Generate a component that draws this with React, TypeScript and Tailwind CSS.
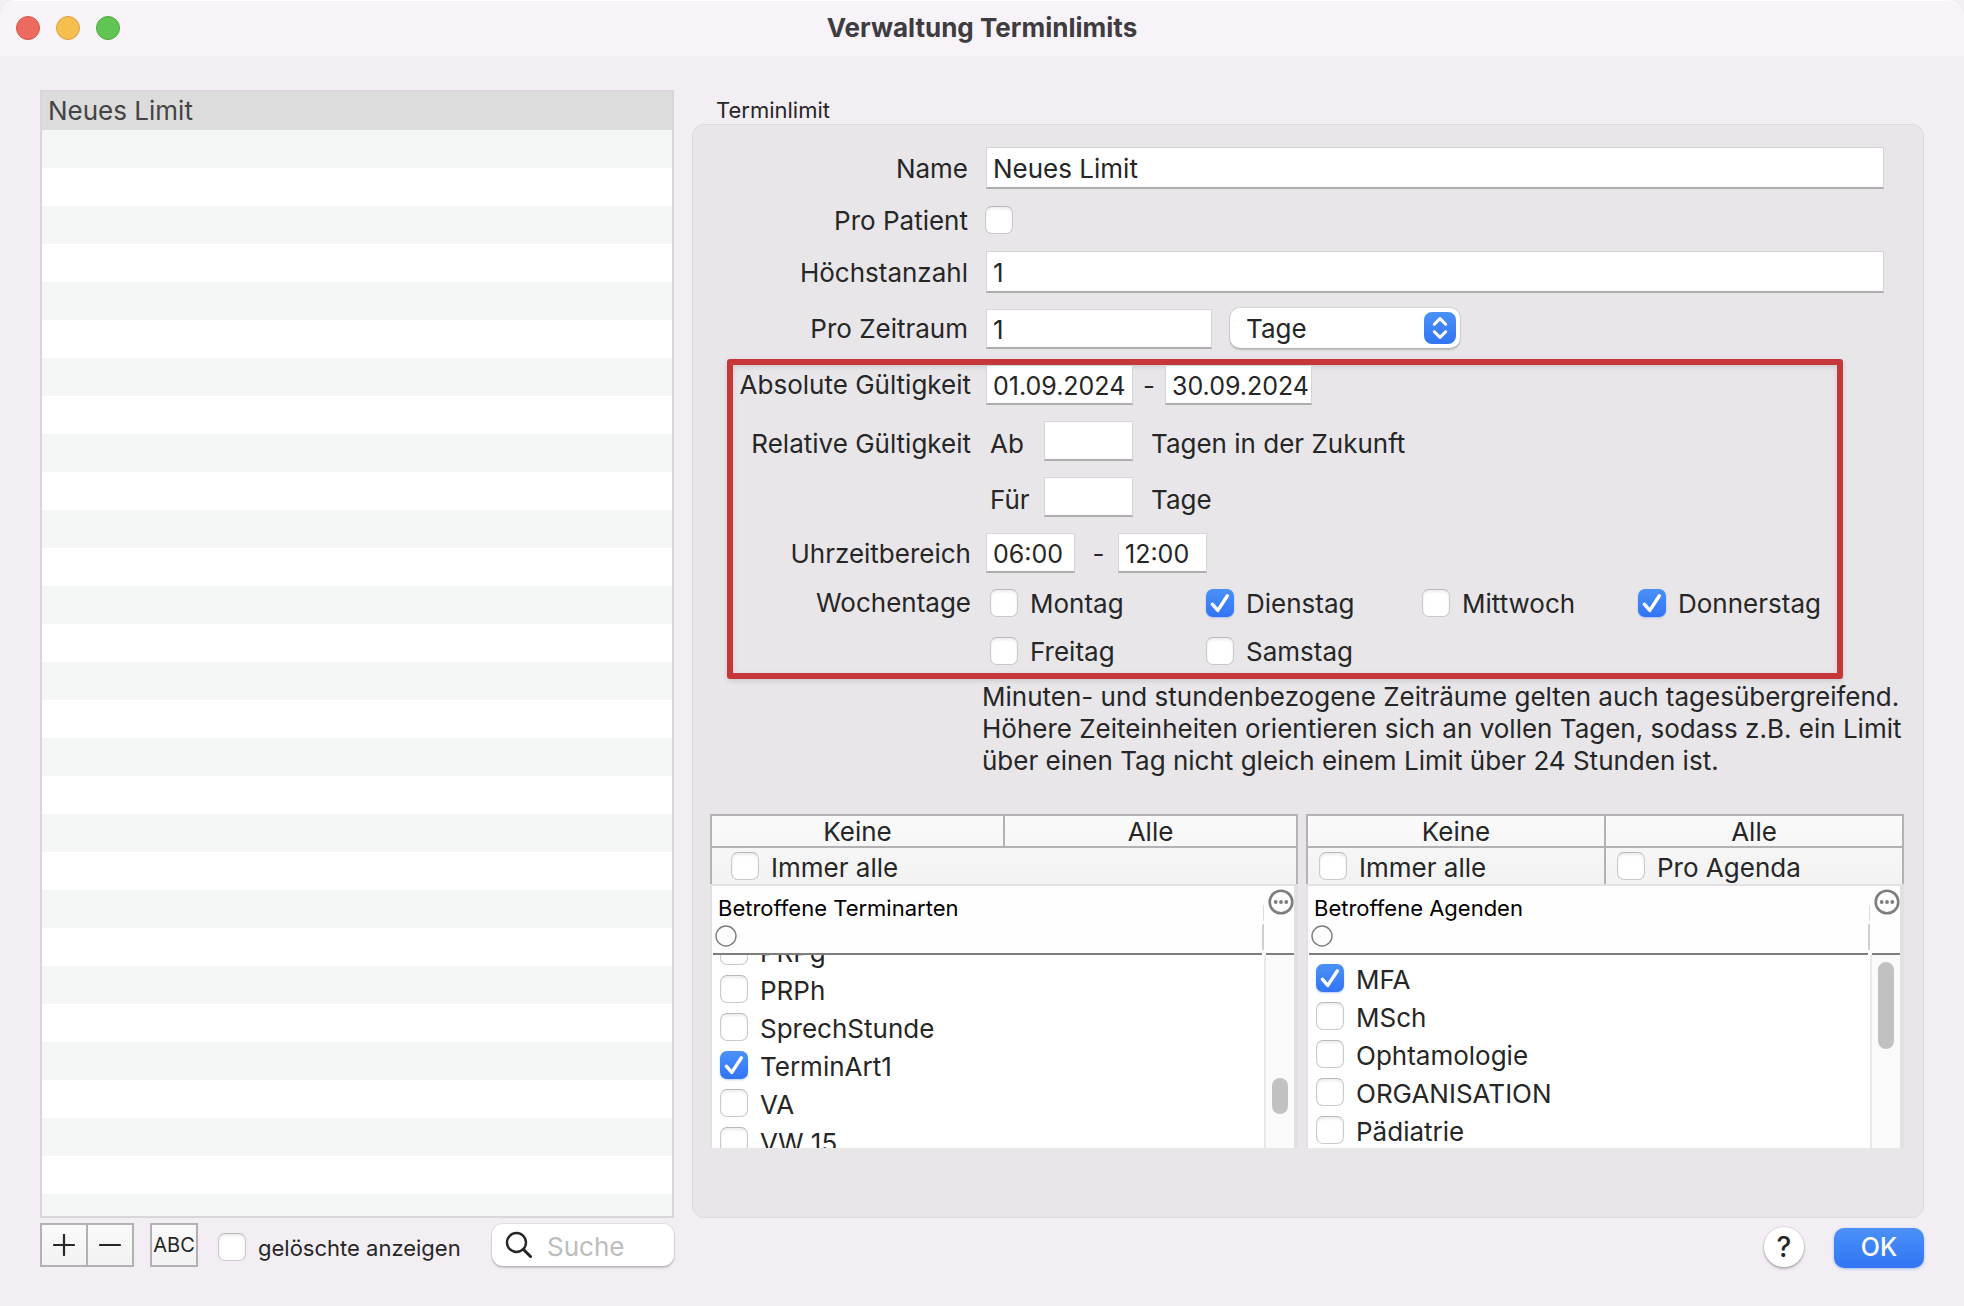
import { useState } from "react";
import type { InputHTMLAttributes, ReactNode } from "react";

const weekdays = [
  { name: "Montag", checked: false },
  { name: "Dienstag", checked: true },
  { name: "Mittwoch", checked: false },
  { name: "Donnerstag", checked: true },
  { name: "Freitag", checked: false },
  { name: "Samstag", checked: false },
];

const appointmentTypes = [
  { name: "PRPg", checked: false },
  { name: "PRPh", checked: false },
  { name: "SprechStunde", checked: false },
  { name: "TerminArt1", checked: true },
  { name: "VA", checked: false },
  { name: "VW 15", checked: false },
];

const agendas = [
  { name: "MFA", checked: true },
  { name: "MSch", checked: false },
  { name: "Ophtamologie", checked: false },
  { name: "ORGANISATION", checked: false },
  { name: "Pädiatrie", checked: false },
];

function Checkbox({ id, checked = false }: { id: string; checked?: boolean }) {
  const [on, setOn] = useState(checked);
  return (
    <span className="relative block h-7 w-7 shrink-0">
      <input
        id={id}
        type="checkbox"
        checked={on}
        onChange={(e) => setOn(e.target.checked)}
        className="block h-7 w-7 appearance-none rounded-[7px] border border-[#cbc9cc] border-t-[#b9b7ba] bg-white shadow-[inset_0_2px_3px_rgba(0,0,0,0.08)] checked:border-0 checked:bg-linear-to-b checked:from-[#4b91f7] checked:to-[#3274f6] checked:shadow-[0_1px_2px_rgba(50,116,246,0.35)]"
      />
      {on && (
        <svg className="pointer-events-none absolute inset-0 h-7 w-7" viewBox="0 0 28 28" fill="none" stroke="#fff" strokeWidth={3.4} strokeLinecap="round" strokeLinejoin="round">
          <path d="M6.3 15.2 L11.8 21.4 L21.4 6.8" />
        </svg>
      )}
    </span>
  );
}

function CheckItem({ id, checked, children }: { id: string; checked?: boolean; children: ReactNode }) {
  return (
    <div className="flex items-center gap-3">
      <Checkbox id={id} checked={checked} />
      <label htmlFor={id} className="whitespace-nowrap pt-[2px]">{children}</label>
    </div>
  );
}

function Field({ className = "", ...props }: InputHTMLAttributes<HTMLInputElement>) {
  return (
    <input
      type="text"
      className={`min-w-0 border border-[#d6d4d7] border-b-2 border-b-[#b0aeb1] bg-white pl-[6px] pt-[2px] outline-none ${className}`}
      {...props}
    />
  );
}

function MoreIcon() {
  return (
    <svg className="h-[26px] w-[26px]" viewBox="0 0 26 26" fill="none">
      <circle cx="13" cy="13" r="11.3" stroke="#7d7d7d" strokeWidth="2.6" />
      <circle cx="7.7" cy="13" r="1.9" fill="#7d7d7d" />
      <circle cx="13" cy="13" r="1.9" fill="#7d7d7d" />
      <circle cx="18.3" cy="13" r="1.9" fill="#7d7d7d" />
    </svg>
  );
}

function ListHeader({ title }: { title: string }) {
  return (
    <div className="flex h-[69px] gap-1 bg-[#fefefe] pl-px">
      <div className="flex flex-1 flex-col border-b-2 border-[#7e7e7e] pl-[5px] pt-2">
        <h3 className="text-[22px] leading-7 text-black">{title}</h3>
        <svg className="-ml-[3px] mt-[3px] h-[22px] w-[22px]" viewBox="0 0 22 22" fill="none" stroke="#7b7b7b" strokeWidth="1.4">
          <circle cx="11" cy="11" r="10" />
        </svg>
      </div>
      <div className="relative w-7 border-b-2 border-[#7e7e7e]">
        <div className="absolute -left-[3px] top-[19px] h-4 w-px bg-[#dcdcdc]" />
        <div className="absolute -left-[4px] top-[38px] h-[26px] w-[2px] bg-[#cfcfcf]" />
        <button aria-label="Spaltenoptionen" className="ml-[2px] mt-[3px] block">
          <MoreIcon />
        </button>
      </div>
    </div>
  );
}

type Item = { name: string; checked: boolean };

function CheckList({ prefix, items, listClass, thumbClass }: { prefix: string; items: Item[]; listClass: string; thumbClass: string }) {
  return (
    <div className="flex h-[193px] overflow-hidden bg-white">
      <ul className={`flex-1 pl-2 ${listClass}`}>
        {items.map((item) => (
          <li key={item.name} className="flex h-[38px] items-center">
            <CheckItem id={`${prefix}-${item.name}`} checked={item.checked}>{item.name}</CheckItem>
          </li>
        ))}
      </ul>
      <div className="w-[30px] border-l-2 border-[#e8e8e8] bg-[#fafafa] px-[6px]">
        <div className={`w-4 rounded-full bg-[#c1c1c1] ${thumbClass}`} />
      </div>
    </div>
  );
}

export default function App() {
  const [limit, setLimit] = useState("Neues Limit");

  return (
    <div className="flex min-h-screen flex-col bg-[#f3eef4] font-['Inter','Liberation_Sans',sans-serif] text-[26px] text-[#262626]">
      <header className="grid h-14 grid-cols-[1fr_auto_1fr] items-center rounded-t-[18px] border-t border-white bg-[#f8f3f9] px-4 pb-[2px]">
        <div className="flex gap-4">
          <button aria-label="Schließen" className="h-6 w-6 rounded-full border border-[#d35549] bg-[#ed6a5e]" />
          <button aria-label="Minimieren" className="h-6 w-6 rounded-full border border-[#d8a03c] bg-[#f5bf4f]" />
          <button aria-label="Maximieren" className="h-6 w-6 rounded-full border border-[#51a73e] bg-[#61c554]" />
        </div>
        <h1 className="font-bold leading-8 text-[#3f3c40]">Verwaltung Terminlimits</h1>
      </header>

      <main className="grid grid-cols-[minmax(0,634fr)_minmax(0,1232fr)] gap-x-[18px] px-10 pt-[34px]">
        <ul className="border-2 border-[#d8d6d9] bg-[repeating-linear-gradient(to_bottom,#fff_0px,#fff_38px,#f4f5f5_38px,#f4f5f5_76px)]">
          <li className="h-[38px] bg-[#dcdcdc] pl-[6px] leading-[38px] text-[#444]">{limit}</li>
        </ul>

        <section>
          <h2 className="h-[34px] pl-6 pt-[6px] text-[22px] leading-7">Terminlimit</h2>
          <div className="rounded-xl border border-[#dcdadd] bg-[#e8e6e9] pb-[69px] pt-[22px]">
            <div className="pr-[39px]">
              <div className="flex h-[42px] items-center gap-[18px]">
                <label htmlFor="name" className="w-[275px] text-right">Name</label>
                <Field id="name" value={limit} onChange={(e) => setLimit(e.target.value)} className="h-[42px] flex-1" />
              </div>
              <div className="mt-[17px] flex h-7 items-center gap-[17px]">
                <label htmlFor="pro-patient" className="w-[275px] text-right">Pro Patient</label>
                <Checkbox id="pro-patient" />
              </div>
              <div className="mt-[17px] flex h-[42px] items-center gap-[18px]">
                <label htmlFor="max" className="w-[275px] text-right">Höchstanzahl</label>
                <Field id="max" defaultValue="1" className="h-[42px] flex-1" />
              </div>
              <div className="mt-[15px] flex h-[42px] items-center gap-[18px]">
                <label htmlFor="period" className="w-[275px] pb-[2px] text-right">Pro Zeitraum</label>
                <Field id="period" defaultValue="1" className="h-10 w-[226px]" />
                <div className="relative mb-[2px]">
                  <select
                    aria-label="Zeiteinheit"
                    defaultValue="Tage"
                    className="block h-10 w-[230px] appearance-none rounded-[10px] bg-white pl-4 shadow-[0_0_1px_1px_rgba(0,0,0,0.08),0_2px_2px_rgba(0,0,0,0.18)] outline-none"
                  >
                    <option>Minuten</option>
                    <option>Stunden</option>
                    <option>Tage</option>
                    <option>Wochen</option>
                    <option>Monate</option>
                  </select>
                  <svg className="pointer-events-none absolute right-1 top-1 h-8 w-8" viewBox="0 0 32 32" fill="none">
                    <defs>
                      <linearGradient id="stepper" x1="0" y1="0" x2="0" y2="1">
                        <stop offset="0" stopColor="#4b91f7" />
                        <stop offset="1" stopColor="#3274f6" />
                      </linearGradient>
                    </defs>
                    <rect width="32" height="32" rx="8" fill="url(#stepper)" />
                    <path d="M10.3 12.3 L16 6.6 L21.7 12.3 M10.3 19.7 L16 25.4 L21.7 19.7" stroke="#fff" strokeWidth="3" strokeLinecap="round" strokeLinejoin="round" />
                  </svg>
                </div>
              </div>
            </div>

            <div className="ml-[34px] mr-20 mt-[9px] rounded-[3px] border-[6px] border-[#c53738] pb-[9px] shadow-[0_2px_5px_rgba(0,0,0,0.12),inset_0_2px_5px_rgba(0,0,0,0.12)]">
              <div className="flex h-10 items-center">
                <label htmlFor="valid-from" className="mr-[15px] w-[238px] pb-[2px] text-right">Absolute Gültigkeit</label>
                <Field id="valid-from" defaultValue="01.09.2024" className="h-10 w-[147px] text-[25px]" />
                <span className="w-8 text-center">-</span>
                <Field aria-label="Gültig bis" defaultValue="30.09.2024" className="h-10 w-[147px] text-[25px]" />
              </div>
              <div className="mt-4 flex h-10 items-center">
                <span className="mr-[15px] w-[238px] pt-1 text-right">Relative Gültigkeit</span>
                <label htmlFor="from-days" className="w-[58px] pl-1 pt-1">Ab</label>
                <Field id="from-days" className="h-10 w-[89px]" />
                <span className="pl-[18px] pt-1">Tagen in der Zukunft</span>
              </div>
              <div className="mt-4 flex h-10 items-center pl-[253px]">
                <label htmlFor="for-days" className="w-[58px] pl-1 pt-1">Für</label>
                <Field id="for-days" className="h-10 w-[89px]" />
                <span className="pl-[18px] pt-1">Tage</span>
              </div>
              <div className="mt-4 flex h-10 items-center">
                <label htmlFor="time-from" className="mr-[15px] w-[238px] text-right">Uhrzeitbereich</label>
                <Field id="time-from" defaultValue="06:00" className="h-10 w-[89px] text-[25px]" />
                <span className="w-[43px] pl-1 text-center">-</span>
                <Field aria-label="Uhrzeit bis" defaultValue="12:00" className="h-10 w-[89px] text-[25px]" />
              </div>
              <div className="mt-[15px] flex">
                <span className="mr-[19px] w-[238px] shrink-0 text-right leading-[30px]">Wochentage</span>
                <div className="grid grid-cols-[216px_216px_216px_auto] gap-y-5">
                  {weekdays.map((day) => (
                    <div key={day.name} className="h-7 leading-7">
                      <CheckItem id={`day-${day.name}`} checked={day.checked}>{day.name}</CheckItem>
                    </div>
                  ))}
                </div>
              </div>
            </div>

            <p className="ml-[289px] mr-4 mt-[2px] leading-8">
              Minuten- und stundenbezogene Zeiträume gelten auch tagesübergreifend.
              Höhere Zeiteinheiten orientieren sich an vollen Tagen, sodass z.B. ein Limit
              über einen Tag nicht gleich einem Limit über 24 Stunden ist.
            </p>

            <div className="mt-[37px] grid grid-cols-[588fr_598fr] gap-2 pl-[17px] pr-[19px]">
              <div>
                <div className="border-2 border-b-0 border-[#b3b1b4] bg-linear-to-b from-[#fafafa] to-[#f2f2f2]">
                  <div className="flex h-8 border-b-2 border-[#b3b1b4]">
                    <button className="flex-1 border-r-2 border-[#b3b1b4] leading-[32px]">Keine</button>
                    <button className="flex-1 leading-[32px]">Alle</button>
                  </div>
                  <div className="flex h-9 items-center pl-[19px]">
                    <CheckItem id="types-all">Immer alle</CheckItem>
                  </div>
                </div>
                <div className="border-l-2 border-r-4 border-t-2 border-[#e2e0e3]">
                  <ListHeader title="Betroffene Terminarten" />
                  <CheckList prefix="type" items={appointmentTypes} listClass="-mt-[23px]" thumbClass="mt-[123px] h-9" />
                </div>
              </div>
              <div>
                <div className="border-2 border-b-0 border-[#b3b1b4] bg-linear-to-b from-[#fafafa] to-[#f2f2f2]">
                  <div className="flex h-8 border-b-2 border-[#b3b1b4]">
                    <button className="flex-1 border-r-2 border-[#b3b1b4] leading-[32px]">Keine</button>
                    <button className="flex-1 leading-[32px]">Alle</button>
                  </div>
                  <div className="flex h-9">
                    <div className="flex flex-1 items-center border-r-2 border-[#b3b1b4] pl-[11px]">
                      <CheckItem id="agendas-all">Immer alle</CheckItem>
                    </div>
                    <div className="flex flex-1 items-center pl-[11px]">
                      <CheckItem id="per-agenda">Pro Agenda</CheckItem>
                    </div>
                  </div>
                </div>
                <div className="border-l-2 border-r-4 border-t-2 border-[#e2e0e3]">
                  <ListHeader title="Betroffene Agenden" />
                  <CheckList prefix="agenda" items={agendas} listClass="pt-1" thumbClass="mt-[7px] h-[87px]" />
                </div>
              </div>
            </div>
          </div>
        </section>
      </main>

      <footer className="grid grid-cols-[minmax(0,634fr)_minmax(0,1232fr)] gap-x-[18px] px-10 pb-9 pt-1">
        <div className="flex items-center">
          <div className="flex h-11 w-[94px] border-2 border-[#b3b1b4] bg-linear-to-b from-[#fafafa] to-[#f2f2f2]">
            <button aria-label="Hinzufügen" className="flex flex-1 items-center justify-center border-r-2 border-[#b3b1b4]">
              <svg className="h-[22px] w-[22px]" viewBox="0 0 22 22" stroke="#262626" strokeWidth="2.2" strokeLinecap="round">
                <path d="M11 1 V21 M1 11 H21" />
              </svg>
            </button>
            <button aria-label="Entfernen" className="flex flex-1 items-center justify-center">
              <svg className="h-[22px] w-[22px]" viewBox="0 0 22 22" stroke="#262626" strokeWidth="2.2" strokeLinecap="round">
                <path d="M1 11 H21" />
              </svg>
            </button>
          </div>
          <button className="ml-4 h-11 w-12 border-2 border-[#b3b1b4] bg-linear-to-b from-[#fafafa] to-[#f2f2f2] text-[20px]">ABC</button>
          <div className="ml-5 mt-1 text-[22px]">
            <CheckItem id="show-deleted">gelöschte anzeigen</CheckItem>
          </div>
          <label className="ml-auto flex h-[42px] w-[182px] items-center rounded-[11px] bg-white pl-[13px] shadow-[0_0_1px_1px_rgba(0,0,0,0.08),0_2px_2px_rgba(0,0,0,0.18)]">
            <svg className="h-7 w-7 shrink-0" viewBox="0 0 28 28" fill="none" stroke="#262626" strokeWidth="2.4" strokeLinecap="round">
              <circle cx="11.5" cy="11.5" r="9.5" />
              <path d="M18.5 18.5 L25.5 25.5" strokeWidth="3" />
            </svg>
            <input type="search" aria-label="Suche" placeholder="Suche" className="ml-[14px] w-full min-w-0 pt-[2px] outline-none placeholder:text-[#bdbdbd]" />
          </label>
        </div>
        <div className="flex items-center justify-end gap-[30px] pt-1">
          <button aria-label="Hilfe" className="h-10 w-10 rounded-full bg-white text-[28px] font-medium leading-10 shadow-[0_0_1px_1px_rgba(0,0,0,0.08),0_2px_3px_rgba(0,0,0,0.25)]">?</button>
          <button className="mt-[2px] h-10 w-[90px] rounded-[10px] bg-linear-to-b from-[#4b91f7] to-[#3274f6] text-[25px] font-medium text-white shadow-[0_1px_3px_rgba(50,116,246,0.4)]">OK</button>
        </div>
      </footer>
    </div>
  );
}
